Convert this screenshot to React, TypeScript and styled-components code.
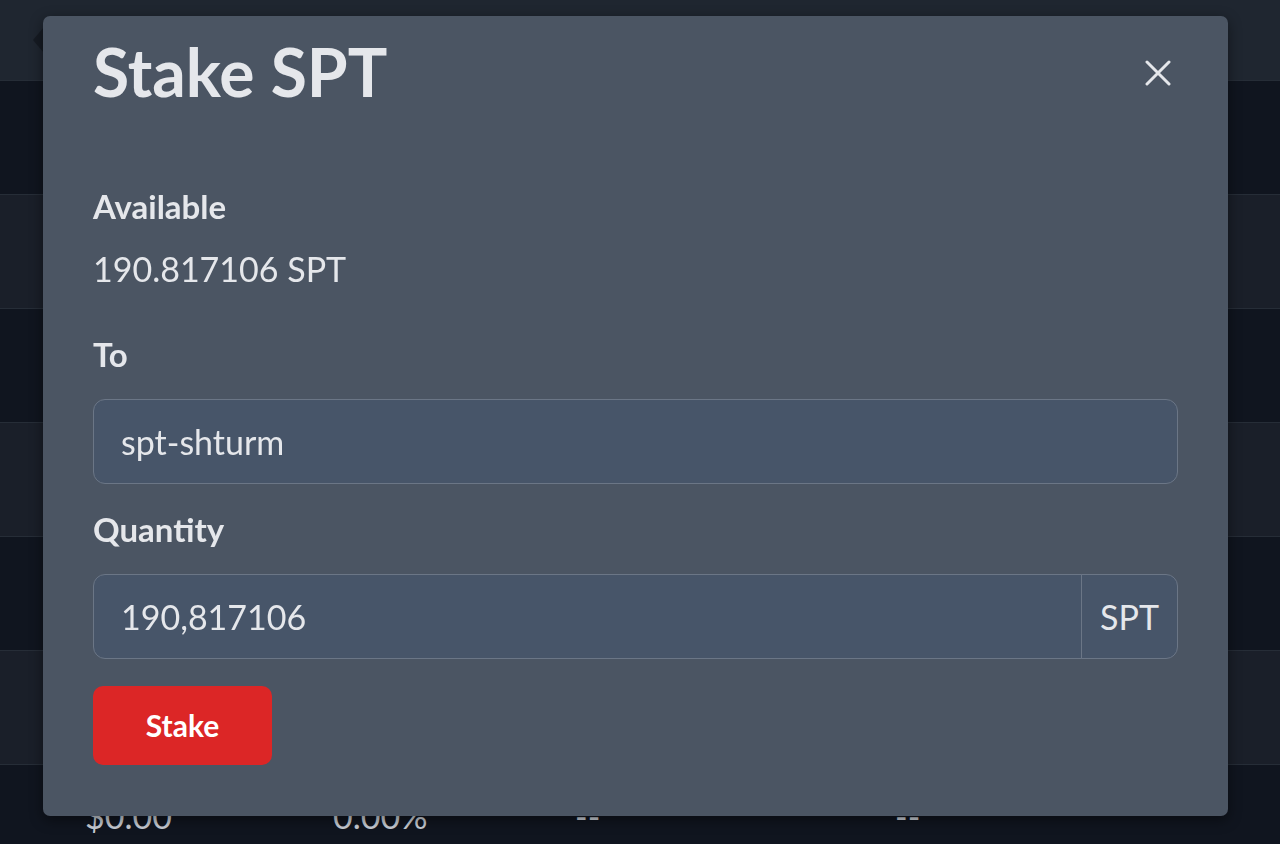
import React from 'react';
import styled, { createGlobalStyle } from 'styled-components';

const GlobalStyle = createGlobalStyle`
  html, body {
    margin: 0;
    padding: 0;
    background: #10151f;
    font-family: Lato, "Noto Sans", sans-serif;
    overflow: hidden;
  }
  * { box-sizing: border-box; }
`;

const Table = styled.div`
  display: flex;
  flex-direction: column;
  height: 844px;
  overflow: hidden;
`;

const HeaderRow = styled.div`
  height: 80px;
  flex-shrink: 0;
  background: #1f2630;
  display: flex;
  align-items: center;
  padding-left: 32px;
`;

const Row = styled.div<{ $light?: boolean }>`
  height: 114px;
  flex-shrink: 0;
  background: ${p => (p.$light ? '#1a1f29' : '#10151f')};
  border-top: 1px solid #262d37;
  display: grid;
  grid-template-columns: 248px 242px 320px 1fr;
  align-items: center;
  padding: 0 0 12px 85px;
  color: #c9ced6;
  font-size: 34px;
`;

const Overlay = styled.div`
  position: fixed;
  inset: 0;
  padding: 16px 52px 0 43px;
`;

const Modal = styled.div`
  width: 1185px;
  background: #4b5563;
  border-radius: 7px;
  box-shadow: 0 4px 14px rgba(0, 0, 0, 0.45);
  padding: 16px 50px 51px 50px;
  color: #e5e7eb;
`;

const ModalHeader = styled.div`
  display: flex;
  align-items: center;
  justify-content: space-between;
`;

const Title = styled.h2`
  margin: 0;
  font-size: 66px;
  line-height: 1.2;
  font-weight: 700;
  color: #e5e7eb;
`;

const CloseButton = styled.button`
  background: none;
  border: none;
  padding: 0;
  margin: 2px 7px 0 0;
  width: 26px;
  height: 26px;
  cursor: pointer;
  display: flex;
`;

const Body = styled.div`
  display: flex;
  flex-direction: column;
  align-items: flex-start;
  margin-top: 77px;
`;

const Label = styled.div<{ $gap?: number }>`
  font-size: 33px;
  line-height: 36px;
  font-weight: 700;
  margin-bottom: ${p => p.$gap ?? 27}px;
`;

const Value = styled.div`
  font-size: 34px;
  line-height: 1.2;
  margin-bottom: 46px;
`;

const Field = styled.div`
  width: 100%;
  height: 85px;
  display: flex;
  margin-bottom: 27px;
`;

const TextInput = styled.input<{ $grouped?: boolean }>`
  flex: 1;
  min-width: 0;
  height: 100%;
  background: #475569;
  border: 1.5px solid #6b7686;
  border-radius: ${p => (p.$grouped ? '12px 0 0 12px' : '12px')};
  padding: 0 27px;
  font-family: inherit;
  font-size: 34px;
  color: #e5e7eb;
  outline: none;
`;

const Addon = styled.div`
  width: 97px;
  height: 100%;
  background: #475569;
  border: 1.5px solid #6b7686;
  margin-left: -1.5px;
  border-radius: 0 12px 12px 0;
  display: flex;
  align-items: center;
  justify-content: center;
  font-size: 34px;
  color: #e5e7eb;
`;

const StakeButton = styled.button`
  width: 179px;
  height: 79px;
  background: #dc2626;
  border: none;
  border-radius: 10px;
  color: #ffffff;
  font-family: inherit;
  font-size: 30px;
  font-weight: 700;
  cursor: pointer;
`;

const rows = [false, true, false, true, false, true, false];

export default function App() {
  return (
    <>
      <GlobalStyle />
      <Table>
        <HeaderRow>
          <svg width="14" height="26" viewBox="0 0 14 26">
            <path d="M12 0 L1 13 L12 26 Z" fill="#161b23" />
          </svg>
        </HeaderRow>
        {rows.map((light, i) => (
          <Row key={i} $light={light}>
            <span>$0.00</span>
            <span>0.00%</span>
            <span>--</span>
            <span>--</span>
          </Row>
        ))}
      </Table>
      <Overlay>
        <Modal>
          <ModalHeader>
            <Title>Stake SPT</Title>
            <CloseButton aria-label="Close">
              <svg width="26" height="26" viewBox="0 0 26 26">
                <path d="M2 2 L24 24 M24 2 L2 24" stroke="#e5e7eb" strokeWidth="3" strokeLinecap="round" />
              </svg>
            </CloseButton>
          </ModalHeader>
          <Body>
            <Label $gap={25}>Available</Label>
            <Value>190.817106 SPT</Value>
            <Label>To</Label>
            <Field>
              <TextInput defaultValue="spt-shturm" />
            </Field>
            <Label>Quantity</Label>
            <Field>
              <TextInput $grouped defaultValue="190,817106" />
              <Addon>SPT</Addon>
            </Field>
            <StakeButton>Stake</StakeButton>
          </Body>
        </Modal>
      </Overlay>
    </>
  );
}
